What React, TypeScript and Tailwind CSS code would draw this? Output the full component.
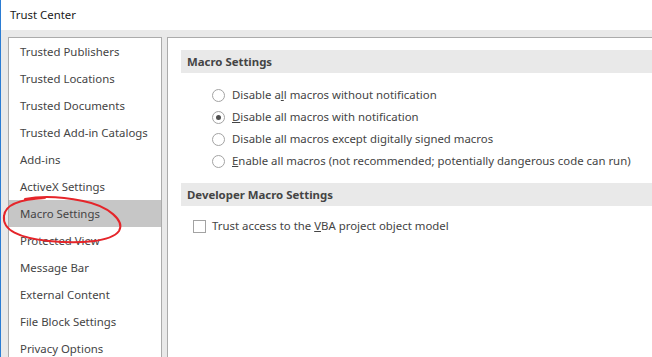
import React from "react";

const navItems = [
  "Trusted Publishers",
  "Trusted Locations",
  "Trusted Documents",
  "Trusted Add-in Catalogs",
  "Add-ins",
  "ActiveX Settings",
  "Macro Settings",
  "Protected View",
  "Message Bar",
  "External Content",
  "File Block Settings",
  "Privacy Options",
];

function Radio({ checked }: { checked?: boolean }) {
  return (
    <span className="flex h-[13px] w-[13px] shrink-0 items-center justify-center rounded-full border border-[#a3a3a3] bg-white">
      {checked && <span className="h-[5px] w-[5px] rounded-full bg-[#505050]" />}
    </span>
  );
}

function SectionHeader({ children }: { children: React.ReactNode }) {
  return (
    <div className="flex h-[23px] items-center bg-[#e9e9e9] pl-[6px] font-bold text-[#444]">{children}</div>
  );
}

export default function App() {
  const options: { checked?: boolean; label: React.ReactNode }[] = [
    { label: <>Disable a<u>l</u>l macros without notification</> },
    { checked: true, label: <><u>D</u>isable all macros with notification</> },
    { label: <>Disable all macros except di<u>g</u>itally signed macros</> },
    { label: <><u>E</u>nable all macros (not recommended; potentially dangerous code can run)</> },
  ];

  return (
    <div
      className="relative flex h-[357px] w-[652px] flex-col overflow-hidden border-l border-[#2b7cd3] bg-[#e9e9e9] text-[11.4px] text-[#444]"
      style={{ fontFamily: '"Noto Sans", "Open Sans", sans-serif' }}
    >
      <div className="flex h-[30px] shrink-0 items-center bg-white pl-[9px] text-[#1a1a1a]">Trust Center</div>

      <div className="flex min-h-0 flex-1 gap-[5px] pl-[7px] pt-[7px]">
        <div className="w-[154px] shrink-0 border-l border-r border-t border-[#ababab] bg-white">
          {navItems.map((item) => (
            <div
              key={item}
              className={`flex h-[27px] items-center pl-[11px] ${item === "Macro Settings" ? "bg-[#c6c6c6]" : ""}`}
            >
              {item}
            </div>
          ))}
        </div>

        <div className="flex-1 border-l border-t border-[#ababab] bg-white pl-[13px] pt-[12px]">
          <SectionHeader>Macro Settings</SectionHeader>
          <div className="mt-[11px] flex flex-col pl-[31px]">
            {options.map((o, i) => (
              <div key={i} className="flex h-[22px] items-center gap-[7px]">
                <Radio checked={o.checked} />
                <span>{o.label}</span>
              </div>
            ))}
          </div>
          <div className="mt-[11px]">
            <SectionHeader>Developer Macro Settings</SectionHeader>
          </div>
          <div className="mt-[9px] flex h-[22px] items-center gap-[6px] pl-[12px]">
            <span className="h-[13px] w-[13px] border border-[#a3a3a3] bg-white" />
            <span>
              Trust access to the <u>V</u>BA project object model
            </span>
          </div>
        </div>
      </div>

      <svg className="pointer-events-none absolute left-0 top-0" width="652" height="357" viewBox="0 0 652 357">
        <path
          d="M 44 198 C 22 199, 4 204, 3 216 C 1 230, 18 238, 48 241 C 78 244, 110 242, 118 231 C 124 221, 108 206, 82 201 C 62 197, 40 196, 24 199"
          fill="none"
          stroke="#e5252a"
          strokeWidth="2"
          strokeLinecap="round"
        />
      </svg>
    </div>
  );
}
